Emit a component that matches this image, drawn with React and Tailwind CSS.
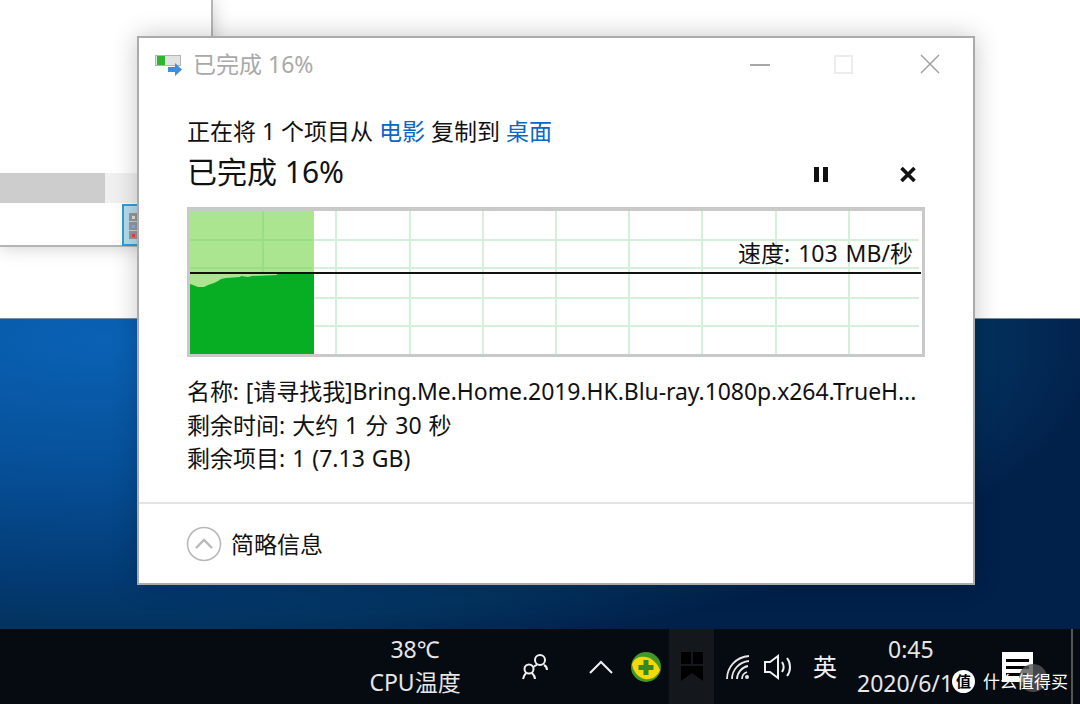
import React from 'react';

const gridX = [72, 145, 219, 292, 365, 438, 511, 585, 658];
const gridY = [28, 56, 86, 114];

function WindowIcon() {
  return (
    <svg width="28" height="26" viewBox="0 0 28 26" className="shrink-0">
      <rect x="0.5" y="4.5" width="25" height="10" fill="#e2e2e2" stroke="#b5b5b5" />
      <rect x="2" y="5" width="8" height="9" fill="#2db52d" />
      <path d="M13 16h7v-4l7 6.5-7 6.5v-4h-7z" fill="#3d8fdc" />
    </svg>
  );
}

function SpeedGraph() {
  return (
    <div className="relative h-[150px] w-[738px] border-[3px] border-t-4 border-[#c9c9c9] bg-white">
      <svg width="732" height="143" viewBox="0 0 732 143" className="block">
        {gridX.map((x) => (
          <rect key={x} x={x} y="0" width="2" height="143" fill="#d5f0d8" />
        ))}
        {gridY.map((y) => (
          <rect key={y} x="0" y={y} width="729" height="2" fill="#d5f0d8" />
        ))}
        <rect x="0" y="0" width="124" height="143" fill="#abe58f" />
        <rect x="72" y="0" width="2" height="62" fill="#97df82" />
        {gridY.slice(0, 2).map((y) => (
          <rect key={y} x="0" y={y} width="122" height="2" fill="#97df82" />
        ))}
        <path
          d="M0 73 L3 74 L8 76 L14 76 L18 74 L24 72 L28 70 L31 68 L36 67 L50 66 L51 65 L58 66 L62 65 L87 64 L87 62 L124 62 L124 143 L0 143 Z"
          fill="#07ae24"
        />
        <rect x="0" y="61" width="731" height="2" fill="#111" />
      </svg>
      <span className="absolute right-[9px] top-[27px] text-[23px] leading-[30px] text-[#111] [word-spacing:2px]">
        速度: 103 MB/秒
      </span>
    </div>
  );
}

function CopyDialog() {
  return (
    <div className="absolute left-[137px] top-[36px] flex h-[549px] w-[838px] flex-col border-2 border-[#ababab] bg-white shadow-[0_0_24px_rgba(0,0,0,0.22)]">
      <div className="flex h-[52px] items-center pl-[16px]">
        <WindowIcon />
        <span className="ml-[10px] text-[23px] leading-[30px] text-[#a9a9a9]">已完成 16%</span>
        <div className="ml-auto flex items-center">
          <svg width="20" height="20" viewBox="0 0 20 20" className="mr-[64px]">
            <rect x="0" y="10" width="20" height="2" fill="#a8a8a8" />
          </svg>
          <div className="mr-[67px] size-[19px] border-2 border-[#ececec]" />
          <svg width="20" height="20" viewBox="0 0 20 20" className="mr-[33px]">
            <path d="M1 1 L19 19 M19 1 L1 19" stroke="#a0a0a0" strokeWidth="1.5" />
          </svg>
        </div>
      </div>

      <div className="flex flex-col pl-[48px]">
        <p className="mt-[26px] text-[23px] leading-[30px] text-[#111]">
          正在将 1 个项目从 <span className="text-[#0a66c8]">电影</span> 复制到{' '}
          <span className="text-[#0a66c8]">桌面</span>
        </p>
        <div className="mt-[7px] flex h-[38px] items-center">
          <span className="text-[30px] leading-[38px] text-[#111]">已完成 16%</span>
          <svg width="14" height="15" viewBox="0 0 14 15" className="ml-auto mt-[5px]">
            <rect x="0" y="0" width="5" height="15" fill="#111" />
            <rect x="9" y="0" width="5" height="15" fill="#111" />
          </svg>
          <svg width="16" height="15" viewBox="0 0 16 15" className="ml-[72px] mr-[57px] mt-[5px]">
            <path d="M1.5 1 L14.5 14 M14.5 1 L1.5 14" stroke="#111" strokeWidth="3.6" />
          </svg>
        </div>
        <div className="mt-[16px]">
          <SpeedGraph />
        </div>
        <div className="mt-[18px] flex flex-col text-[23px] leading-[33.5px] text-[#111] [word-spacing:1px]">
          <p className="whitespace-nowrap tracking-[-0.07px]">名称: [请寻找我]Bring.Me.Home.2019.HK.Blu-ray.1080p.x264.TrueH...</p>
          <p>剩余时间: 大约 1 分 30 秒</p>
          <p>剩余项目: 1 (7.13 GB)</p>
        </div>
      </div>

      <div className="mt-auto flex h-[81px] items-center border-t-2 border-[#e3e3e3] pl-[47px]">
        <svg width="36" height="36" viewBox="0 0 36 36">
          <circle cx="18" cy="18" r="16.5" fill="none" stroke="#b9b9b9" strokeWidth="1.6" />
          <path d="M10 22 L18 14 L26 22" fill="none" stroke="#b9b9b9" strokeWidth="2.4" />
        </svg>
        <span className="ml-[9px] text-[23px] leading-[30px] text-[#111]">简略信息</span>
      </div>
    </div>
  );
}

function BackWindow() {
  return (
    <div className="absolute left-0 top-0 h-[247px] w-[213px] border-r-2 border-b-2 border-[#b5b5b5] bg-white shadow-[0_0_18px_rgba(0,0,0,0.2)]">
      <div className="mt-[173px] flex h-[30px] bg-[#f0f0f0]">
        <div className="h-full w-[105px] bg-[#cdcdcd]" />
      </div>
      <div className="absolute left-[122px] top-[204px] flex h-[42px] w-[18px] flex-col items-start border-2 border-[#2aa0dc] bg-[#b9dcec] pl-[5px] pt-[7px]">
        <span className="flex size-[8px] items-center justify-center bg-[#999]">
          <span className="size-[3px] bg-[#dfe8df]" />
        </span>
        <span className="mt-[1px] flex size-[8px] items-center justify-center bg-[#999]">
          <span className="size-[3px] bg-[#8fb0ef]" />
        </span>
        <span className="mt-[1px] flex size-[8px] items-center justify-center bg-[#999]">
          <span className="size-[3px] bg-[#e04848]" />
        </span>
      </div>
    </div>
  );
}

function Taskbar() {
  return (
    <div className="absolute inset-x-0 bottom-0 flex h-[75px] items-center bg-[#060b12] pl-[370px] text-[#e6e6e6]">
      <div className="flex w-[90px] flex-col items-center whitespace-nowrap pb-[2px] text-[23px] leading-[33px]">
        <span>38℃</span>
        <span>CPU温度</span>
      </div>
      <svg width="30" height="30" viewBox="0 0 30 30" fill="none" stroke="#f0f0f0" strokeWidth="2" className="ml-[60px]">
        <circle cx="20" cy="8" r="5" />
        <path d="M14 15 C15 13 16 13 17 13 M24 13 C26 14 27 16 27 18" />
        <circle cx="9" cy="17" r="4.5" />
        <path d="M3 27 C4 24 5 22 6 21 M12 21 C14 23 15 25 15 27" />
      </svg>
      <svg width="24" height="14" viewBox="0 0 24 14" fill="none" stroke="#f0f0f0" strokeWidth="2" className="ml-[39px]">
        <path d="M1 13 L12 2 L23 13" />
      </svg>
      <svg width="32" height="32" viewBox="0 0 32 32" className="ml-[17px]">
        <circle cx="16" cy="16" r="15" fill="#3f9a2b" />
        <path d="M2 13 C5 6 11 5 16 6 C22 7 28 13 30 19 C27 26 21 29 15 28 C9 27 3 21 2 13 Z" fill="#f6d80a" />
        <path d="M13.5 9h5v5h5v5h-5v5h-5v-5h-5v-5h5z" fill="#2f8a25" />
      </svg>
      <div className="ml-[7px] flex h-[75px] w-[45px] items-center justify-center bg-[#14171c]">
        <svg width="22" height="30" viewBox="0 0 22 30" fill="#000">
          <rect x="0" y="0" width="10" height="12" />
          <rect x="12" y="0" width="10" height="12" />
          <path d="M0 14 H22 V29 L11 21 L0 29 Z" />
        </svg>
      </div>
      <svg width="26" height="26" viewBox="0 0 26 26" fill="none" stroke="#e8e8e8" strokeWidth="1.8" className="ml-[12px]">
        <path d="M1 25 C1 13 10 3 23 2" />
        <path d="M6 25 C6 16 13 8 23 7" />
        <path d="M11 25 C11 19 16 13 22 12" />
        <path d="M16 25 C16 22 18 19 21 18" />
        <circle cx="21" cy="23" r="2" fill="#e8e8e8" stroke="none" />
      </svg>
      <svg width="32" height="26" viewBox="0 0 32 26" fill="none" stroke="#f0f0f0" strokeWidth="2" className="ml-[12px]">
        <path d="M1 8 H6 L14 2 V24 L6 18 H1 Z" />
        <path d="M18 8 C20 11 20 15 18 18" />
        <path d="M23 4 C27 9 27 17 23 22" />
      </svg>
      <span className="ml-[17px] text-[24px] leading-[30px] text-[#f0f0f0]">英</span>
      {/* date's last digit is hidden behind the watermark in the screenshot */}
      <div className="ml-[19px] flex w-[108px] flex-col items-start whitespace-nowrap pb-[2px] text-[23px] leading-[34px]">
        <span className="pl-[32px]">0:45</span>
        <span className="pl-[1px]">2020/6/1</span>
      </div>
      <div className="ml-[38px] h-[30px] w-[31px] self-start mt-[23px] bg-white pt-[7px]">
        <div className="mx-[4px] h-[3px] bg-black" />
        <div className="mx-[4px] mt-[4px] h-[3px] bg-black" />
        <div className="mx-[4px] mt-[4px] h-[3px] bg-black" />
      </div>
      <div className="absolute bottom-0 right-[7px] top-0 w-[2px] bg-[#555]" />
    </div>
  );
}

// SMZDM watermark sits over the tray
function Watermark() {
  return (
    <div className="absolute bottom-[11px] left-[952px] flex items-center gap-[8px]">
      <div className="absolute left-[67px] top-[-6px] size-[28px] rounded-full bg-[#555]/80" />
      <div className="relative flex size-[23px] items-center justify-center rounded-full bg-white text-[15px] font-bold leading-none text-black">
        值
      </div>
      <span className="relative text-[17px] leading-[23px] text-white">什么值得买</span>
    </div>
  );
}

export default function App() {
  return (
    <div
      className="relative h-[704px] w-[1080px] overflow-hidden bg-white"
      style={{ fontFamily: '"Noto Sans", "Noto Sans CJK SC", sans-serif' }}
    >
      <div className="absolute inset-x-0 bottom-0 top-[318px] border-t border-[#7f8fa0] bg-[radial-gradient(ellipse_1000px_340px_at_10%_5%,#0a62b5_0%,#064f97_40%,#033a72_72%,#03335f_85%,#01204a_100%)]" />
      <BackWindow />
      <CopyDialog />
      <Taskbar />
      <Watermark />
    </div>
  );
}
